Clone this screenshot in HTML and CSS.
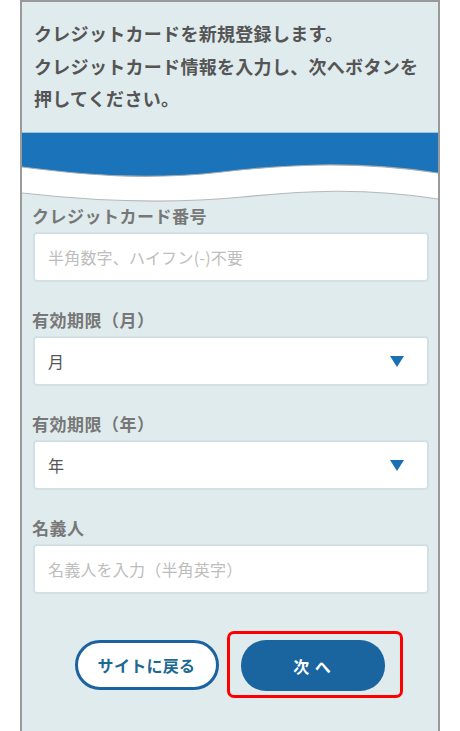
FILE: index.html
```html
<!DOCTYPE html>
<html lang="ja">
<head>
<meta charset="utf-8">
<title>クレジットカード登録</title>
<link rel="stylesheet" href="styles.css">
</head>
<body>
<div class="frame">
  <div class="intro">
    <p>クレジットカードを新規登録します。</p>
    <p>クレジットカード情報を入力し、次へボタンを押してください。</p>
  </div>
  <svg class="wave" viewBox="0 0 416 72" preserveAspectRatio="none" width="416" height="72">
    <path d="M0,35 C70,44 130,48 200,40 C260,33 330,28 416,41 L416,67 C340,55 280,59 220,65 C150,72 80,70 0,61 Z" fill="#ffffff"/>
    <path d="M0,1 L416,1 L416,41 C330,28 260,33 200,40 C130,48 70,44 0,35 Z" fill="#1b74ba"/>
    <line x1="0" y1="0.5" x2="416" y2="0.5" stroke="#9cc3de" stroke-width="1"/>
    <path d="M0,35 C70,44 130,48 200,40 C260,33 330,28 416,41" fill="none" stroke="#a9adb0" stroke-width="1.2"/>
    <path d="M0,61 C80,70 150,72 220,65 C280,59 340,55 416,67" fill="none" stroke="#b4b8ba" stroke-width="1.2"/>
  </svg>
  <form class="form">
    <div class="field">
      <label class="label">クレジットカード番号</label>
      <input class="box" type="text" placeholder="半角数字、ハイフン(-)不要">
    </div>
    <div class="field">
      <label class="label">有効期限（月）</label>
      <div class="box select"><span>月</span><svg class="arrow" width="14" height="11" viewBox="0 0 14 11"><path d="M0,0 L14,0 L7,11 Z" fill="#1b6fb4"/></svg></div>
    </div>
    <div class="field">
      <label class="label">有効期限（年）</label>
      <div class="box select"><span>年</span><svg class="arrow" width="14" height="11" viewBox="0 0 14 11"><path d="M0,0 L14,0 L7,11 Z" fill="#1b6fb4"/></svg></div>
    </div>
    <div class="field">
      <label class="label">名義人</label>
      <input class="box" type="text" placeholder="名義人を入力（半角英字）">
    </div>
    <div class="buttons">
      <button type="button" class="btn btn-back">サイトに戻る</button>
      <button type="button" class="btn btn-next">次 へ</button>
    </div>
  </form>
  <div class="highlight"></div>
</div>
</body>
</html>
```

FILE: styles.css
```css
html, body {
  margin: 0;
  padding: 0;
  background: #ffffff;
}

body {
  font-family: "Noto Sans CJK JP", "Noto Sans", sans-serif;
}

.frame {
  position: relative;
  box-sizing: border-box;
  margin-left: 20px;
  width: 420px;
  height: 731px;
  border: 2px solid #9a9a9a;
  border-bottom: none;
  background: #e0ebed;
}

.intro {
  padding: 15px 8px 0 12px;
  height: 115px;
  box-sizing: border-box;
}

.intro p {
  margin: 0;
  font-size: 18px;
  font-weight: 700;
  line-height: 32.5px;
  letter-spacing: 0.3px;
  color: #555555;
}

.wave {
  display: block;
  margin-top: 15px;
}

.form {
  padding: 0 9px 0 11px;
}

.field {
  display: flex;
  flex-direction: column;
  margin-bottom: 26px;
}

.label {
  margin-left: -1px;
  font-size: 17px;
  font-weight: 700;
  line-height: 24px;
  letter-spacing: 0.5px;
  color: #777777;
  margin-bottom: 4px;
}

.box {
  box-sizing: border-box;
  height: 50px;
  width: 396px;
  border: 2px solid #d2e1e5;
  border-radius: 4px;
  background: #ffffff;
  padding: 0 0 0 13px;
  font-family: "Noto Sans CJK JP", "Noto Sans", sans-serif;
  font-size: 16px;
  letter-spacing: 0.2px;
  color: #555555;
  outline: none;
}

.box::placeholder {
  color: #bdbdbd;
}

.select {
  display: flex;
  align-items: center;
  justify-content: space-between;
  padding-right: 23px;
}

.arrow {
  display: block;
}

.buttons {
  display: flex;
  justify-content: center;
  gap: 22px;
  margin-top: 46px;
  padding-right: 3px;
}

.btn {
  box-sizing: border-box;
  width: 144px;
  height: 50px;
  border-radius: 25px;
  font-family: "Noto Sans CJK JP", "Noto Sans", sans-serif;
  font-size: 16px;
  font-weight: 700;
  cursor: pointer;
}

.btn-back {
  background: #ffffff;
  border: 3px solid #1b62a0;
  color: #1b6a91;
  letter-spacing: 0.3px;
}

.btn-next {
  background: #1a64a0;
  border: none;
  color: #ffffff;
  height: 51px;
  letter-spacing: 1px;
}

.highlight {
  position: absolute;
  left: 205px;
  top: 629px;
  width: 176px;
  height: 67px;
  box-sizing: border-box;
  border: 3px solid #ff0000;
  border-radius: 7px;
}
```
